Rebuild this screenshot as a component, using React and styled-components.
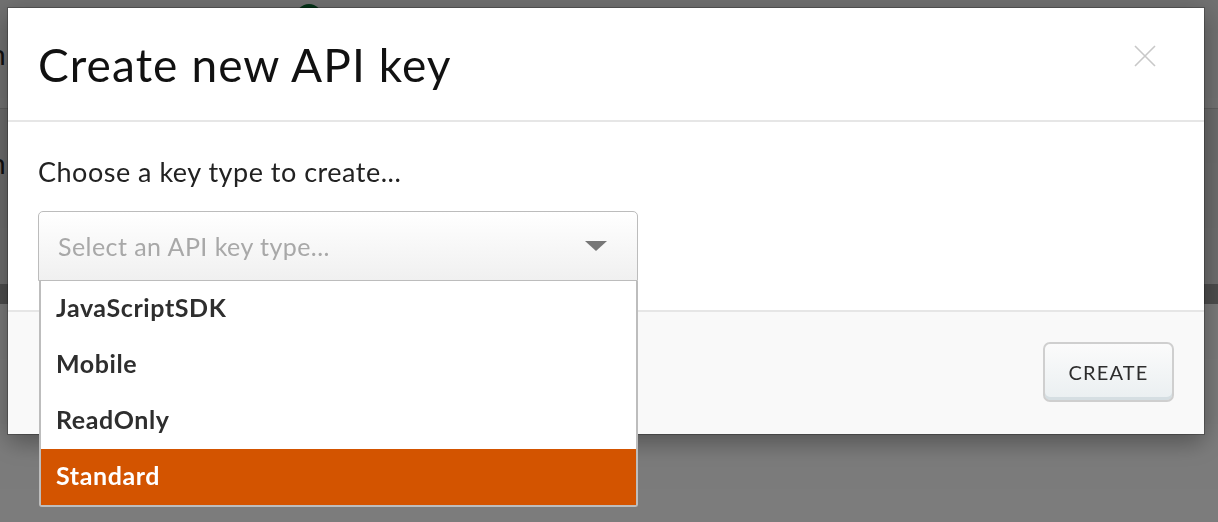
import React from "react";
import styled, { createGlobalStyle } from "styled-components";

const options = ["JavaScriptSDK", "Mobile", "ReadOnly", "Standard"];

export default function App() {
  const selected = "Standard";

  return (
    <>
      <GlobalStyle />
      <BackPage>
        <BackTop>
          <BackLetter>n</BackLetter>
          <Avatar />
        </BackTop>
        <BackRow>
          <BackLetter>n</BackLetter>
        </BackRow>
        <BackBand />
      </BackPage>
      <Overlay />
      <Modal>
        <Header>
          <Title>Create new API key</Title>
          <CloseButton aria-label="Close">
            <svg width="22" height="22" viewBox="0 0 22 22">
              <path d="M1 1 L21 21 M21 1 L1 21" stroke="#c8c8c8" strokeWidth="1.6" fill="none" />
            </svg>
          </CloseButton>
        </Header>
        <Body>
          <Label>Choose a key type to create...</Label>
          <SelectWrap>
            <SelectBox $open>
              <Placeholder>Select an API key type...</Placeholder>
              <Caret />
            </SelectBox>
            <Menu>
              {options.map((o) => (
                <Option key={o} $active={o === selected}>
                  {o}
                </Option>
              ))}
            </Menu>
          </SelectWrap>
        </Body>
        <Footer>
          <CreateButton>CREATE</CreateButton>
        </Footer>
      </Modal>
    </>
  );
}

const GlobalStyle = createGlobalStyle`
  body {
    margin: 0;
    background: #ffffff;
    font-family: Lato, "Open Sans", "Liberation Sans", sans-serif;
    overflow: hidden;
  }
`;

const BackPage = styled.div`
  height: 522px;
  display: flex;
  flex-direction: column;
  background: #f4f4f4;
`;

const BackTop = styled.div`
  height: 108px;
  display: flex;
  align-items: flex-start;
  border-bottom: 1px solid #c4c4c4;
  background: #eaeaea;
`;

const BackLetter = styled.span`
  font-size: 28px;
  line-height: 32px;
  color: #222;
  margin-left: -10px;
  margin-top: 38px;
`;

const Avatar = styled.div`
  width: 26px;
  height: 26px;
  border-radius: 50%;
  background: #0a6a32;
  margin-left: 290px;
  margin-top: 4px;
`;

const BackRow = styled.div`
  height: 175px;
  display: flex;
  align-items: flex-start;
  background: #dcdcdc;
`;

const BackBand = styled.div`
  height: 20px;
  background: #9a9a9a;
`;

const Overlay = styled.div`
  position: fixed;
  inset: 0;
  background: linear-gradient(rgba(0, 0, 0, 0.52), rgba(0, 0, 0, 0.49));
`;

const Modal = styled.div`
  position: fixed;
  top: 8px;
  left: 8px;
  width: 1196px;
  height: 426px;
  background: #fff;
  display: flex;
  flex-direction: column;
  box-shadow: 0 0 0 1px rgba(0, 0, 0, 0.25), 0 8px 24px rgba(0, 0, 0, 0.35);
`;

const Header = styled.div`
  height: 114px;
  border-bottom: 2px solid #e6e6e6;
  display: flex;
  align-items: center;
  justify-content: space-between;
  padding: 0 48px 0 30px;
  box-sizing: border-box;
`;

const Title = styled.h1`
  margin: 0;
  font-size: 46px;
  font-weight: 400;
  color: #111;
  letter-spacing: 1.1px;
`;

const CloseButton = styled.button`
  border: 0;
  background: none;
  padding: 0;
  display: flex;
  margin-top: -16px;
`;

const Body = styled.div`
  height: 190px;
  padding: 34px 30px 0;
  box-sizing: border-box;
  border-bottom: 2px solid #e6e6e6;
`;

const Label = styled.div`
  font-size: 27px;
  color: #222;
  line-height: 32px;
  letter-spacing: 0.5px;
  margin-bottom: 23px;
`;

const SelectWrap = styled.div`
  position: relative;
  width: 600px;
  z-index: 2;
`;

const SelectBox = styled.div`
  height: 70px;
  box-sizing: border-box;
  border: 1px solid #bcbcbc;
  border-radius: ${(p) => (p.$open ? "5px 5px 0 0" : "5px")};
  background: linear-gradient(#ffffff, #f0f0f0);
  display: flex;
  align-items: center;
  justify-content: space-between;
  padding: 0 30px 0 19px;
`;

const Placeholder = styled.span`
  font-size: 25px;
  letter-spacing: 0.45px;
  color: #a8a8a8;
`;

const Caret = styled.span`
  width: 0;
  height: 0;
  border-left: 11px solid transparent;
  border-right: 11px solid transparent;
  border-top: 10px solid #777;
`;

const Menu = styled.ul`
  position: absolute;
  top: 70px;
  left: 1px;
  right: 0;
  margin: 0;
  padding: 0;
  list-style: none;
  background: #fff;
  border: 2px solid #bdbdbd;
  border-top: 0;
  border-radius: 0 0 3px 3px;
`;

const Option = styled.li`
  height: 56px;
  box-sizing: border-box;
  display: flex;
  align-items: center;
  padding: 0 0 4px 15px;
  font-size: 25px;
  letter-spacing: 0.6px;
  font-weight: 700;
  color: ${(p) => (p.$active ? "#fff" : "#2e2e2e")};
  background: ${(p) => (p.$active ? "#d35400" : "#fff")};
`;

const Footer = styled.div`
  flex: 1;
  background: #f9f9f9;
  display: flex;
  align-items: center;
  justify-content: flex-end;
  padding: 0 30px 2px;
`;

const CreateButton = styled.button`
  width: 131px;
  height: 60px;
  border: 2px solid #cfcfcf;
  border-radius: 7px;
  background: linear-gradient(#fbfbfb, #eaeff1);
  box-shadow: inset 0 -3px 0 #d5dee2;
  font-family: Lato, "Open Sans", "Liberation Sans", sans-serif;
  font-size: 20px;
  color: #2d2d2d;
  letter-spacing: 1.2px;
`;
